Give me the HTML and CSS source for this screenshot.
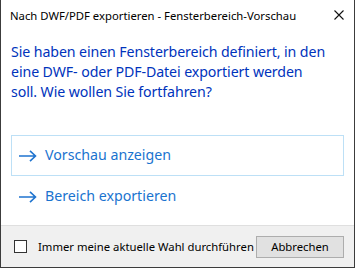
FILE: index.html
```html
<!DOCTYPE html>
<html lang="de">
<head>
  <meta charset="UTF-8">
  <link rel="stylesheet" href="styles.css">
  <title>Fensterbereich-Vorschau</title>
</head>
<body>
  <div class="dialog">
    <div class="titlebar">
      <span class="title">Nach DWF/PDF exportieren - Fensterbereich-Vorschau</span>
      <svg class="close" width="10" height="10" viewBox="0 0 10 10">
        <path d="M0.5 0.5 L9.5 9.5 M9.5 0.5 L0.5 9.5" stroke="#111" stroke-width="1.1" fill="none"/>
      </svg>
    </div>
    <div class="body">
      <p class="instruction">Sie haben einen Fensterbereich definiert, in den<br>eine DWF- oder PDF-Datei exportiert werden<br>soll. Wie wollen Sie fortfahren?</p>
      <!-- command links -->
      <div class="commands">
        <div class="cmd cmd-focus">
          <svg class="arrow" width="18" height="12" viewBox="0 0 18 12">
            <path d="M0 6 H16.5 M11 0.8 L16.5 6 L11 11.2" stroke="#1f74cf" stroke-width="1.6" fill="none"/>
          </svg>
          <span>Vorschau anzeigen</span>
        </div>
        <div class="cmd">
          <svg class="arrow" width="18" height="12" viewBox="0 0 18 12">
            <path d="M0 6 H16.5 M11 0.8 L16.5 6 L11 11.2" stroke="#1f74cf" stroke-width="1.6" fill="none"/>
          </svg>
          <span>Bereich exportieren</span>
        </div>
      </div>
    </div>
    <div class="footer">
      <label class="check"><span class="box"></span>Immer meine aktuelle Wahl durchführen</label>
      <button class="btn">Abbrechen</button>
    </div>
  </div>
</body>
</html>
```
FILE: styles.css
```css
body {
  margin: 0;
  background: #fff;
  font-family: 'Noto Sans', 'Open Sans', sans-serif;
}

.dialog {
  width: 355px;
  height: 268px;
  box-sizing: border-box;
  border: 1px solid #3c3c3c;
  border-top: none;
  display: flex;
  flex-direction: column;
  background: #fff;
}

.titlebar {
  height: 30px;
  display: flex;
  align-items: center;
  justify-content: space-between;
  padding: 0 10px 0 9px;
}

.title {
  font-size: 11.3px;
  color: #000;
  white-space: nowrap;
}

.close {
  margin-top: -1px;
}

.body {
  flex: 1;
  padding: 0 10px;
}

.instruction {
  margin: 12px 0 0 0;
  font-size: 14.2px;
  letter-spacing: -0.1px;
  line-height: 20px;
  color: #0033bc;
  white-space: nowrap;
}

.commands {
  margin-top: 33px;
}

.cmd {
  height: 39px;
  display: flex;
  align-items: center;
  gap: 8px;
  padding: 0 7px;
  border: 1px solid transparent;
  font-size: 14.2px;
  color: #1a73cf;
}

.cmd span {
  margin-top: -2px;
}

.cmd-focus {
  border-color: #bde0f6;
}

.footer {
  height: 41px;
  background: #f0f0f0;
  border-top: 1px solid #dfdfdf;
  display: flex;
  align-items: center;
  justify-content: space-between;
  padding: 0 10px 0 13px;
}

.check {
  display: flex;
  align-items: center;
  gap: 11px;
  font-size: 11.3px;
  color: #000;
  white-space: nowrap;
}

.box {
  width: 11px;
  height: 11px;
  border: 1px solid #333;
  background: #fff;
}

.btn {
  width: 88px;
  height: 22px;
  background: #e1e1e1;
  border: 1px solid #adadad;
  font-family: inherit;
  font-size: 11.3px;
  color: #000;
  padding: 0;
}
```
